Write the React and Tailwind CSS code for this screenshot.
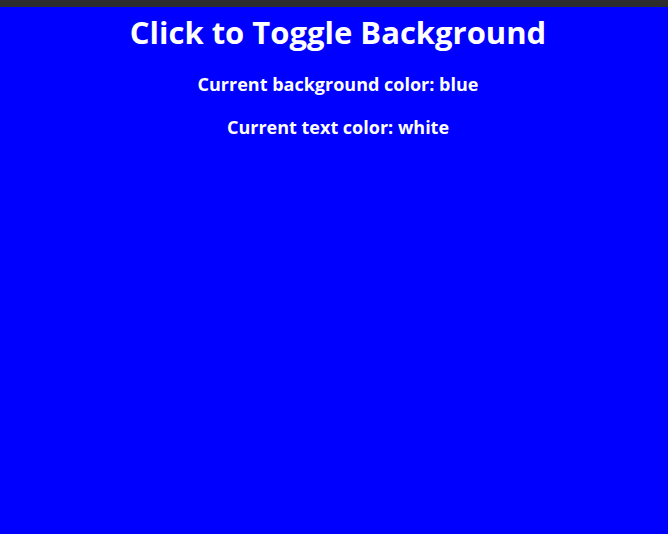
import React, { useState } from 'react';

const App = () => {
  const [isBlue, setIsBlue] = useState(true);

  const bg = isBlue ? 'blue' : 'white';
  const fg = isBlue ? 'white' : 'blue';

  return (
    <div className="h-[534px] flex flex-col font-['Open_Sans',sans-serif]">
      <div className="h-[7px] bg-[#2d2d2d]" />
      <div
        className={`flex-1 text-center pl-2 cursor-pointer ${isBlue ? 'bg-[#0000ff] text-white' : 'bg-white text-[#0000ff]'}`}
        onClick={() => setIsBlue(!isBlue)}
      >
        <h1 className="text-[31px] font-bold leading-[40px] pt-[5px]">Click to Toggle Background</h1>
        <p className="text-[18px] font-bold leading-[24px] mt-[20px]">Current background color: {bg}</p>
        <p className="text-[18px] font-bold leading-[24px] mt-[19px]">Current text color: {fg}</p>
      </div>
    </div>
  );
};

export default App;
